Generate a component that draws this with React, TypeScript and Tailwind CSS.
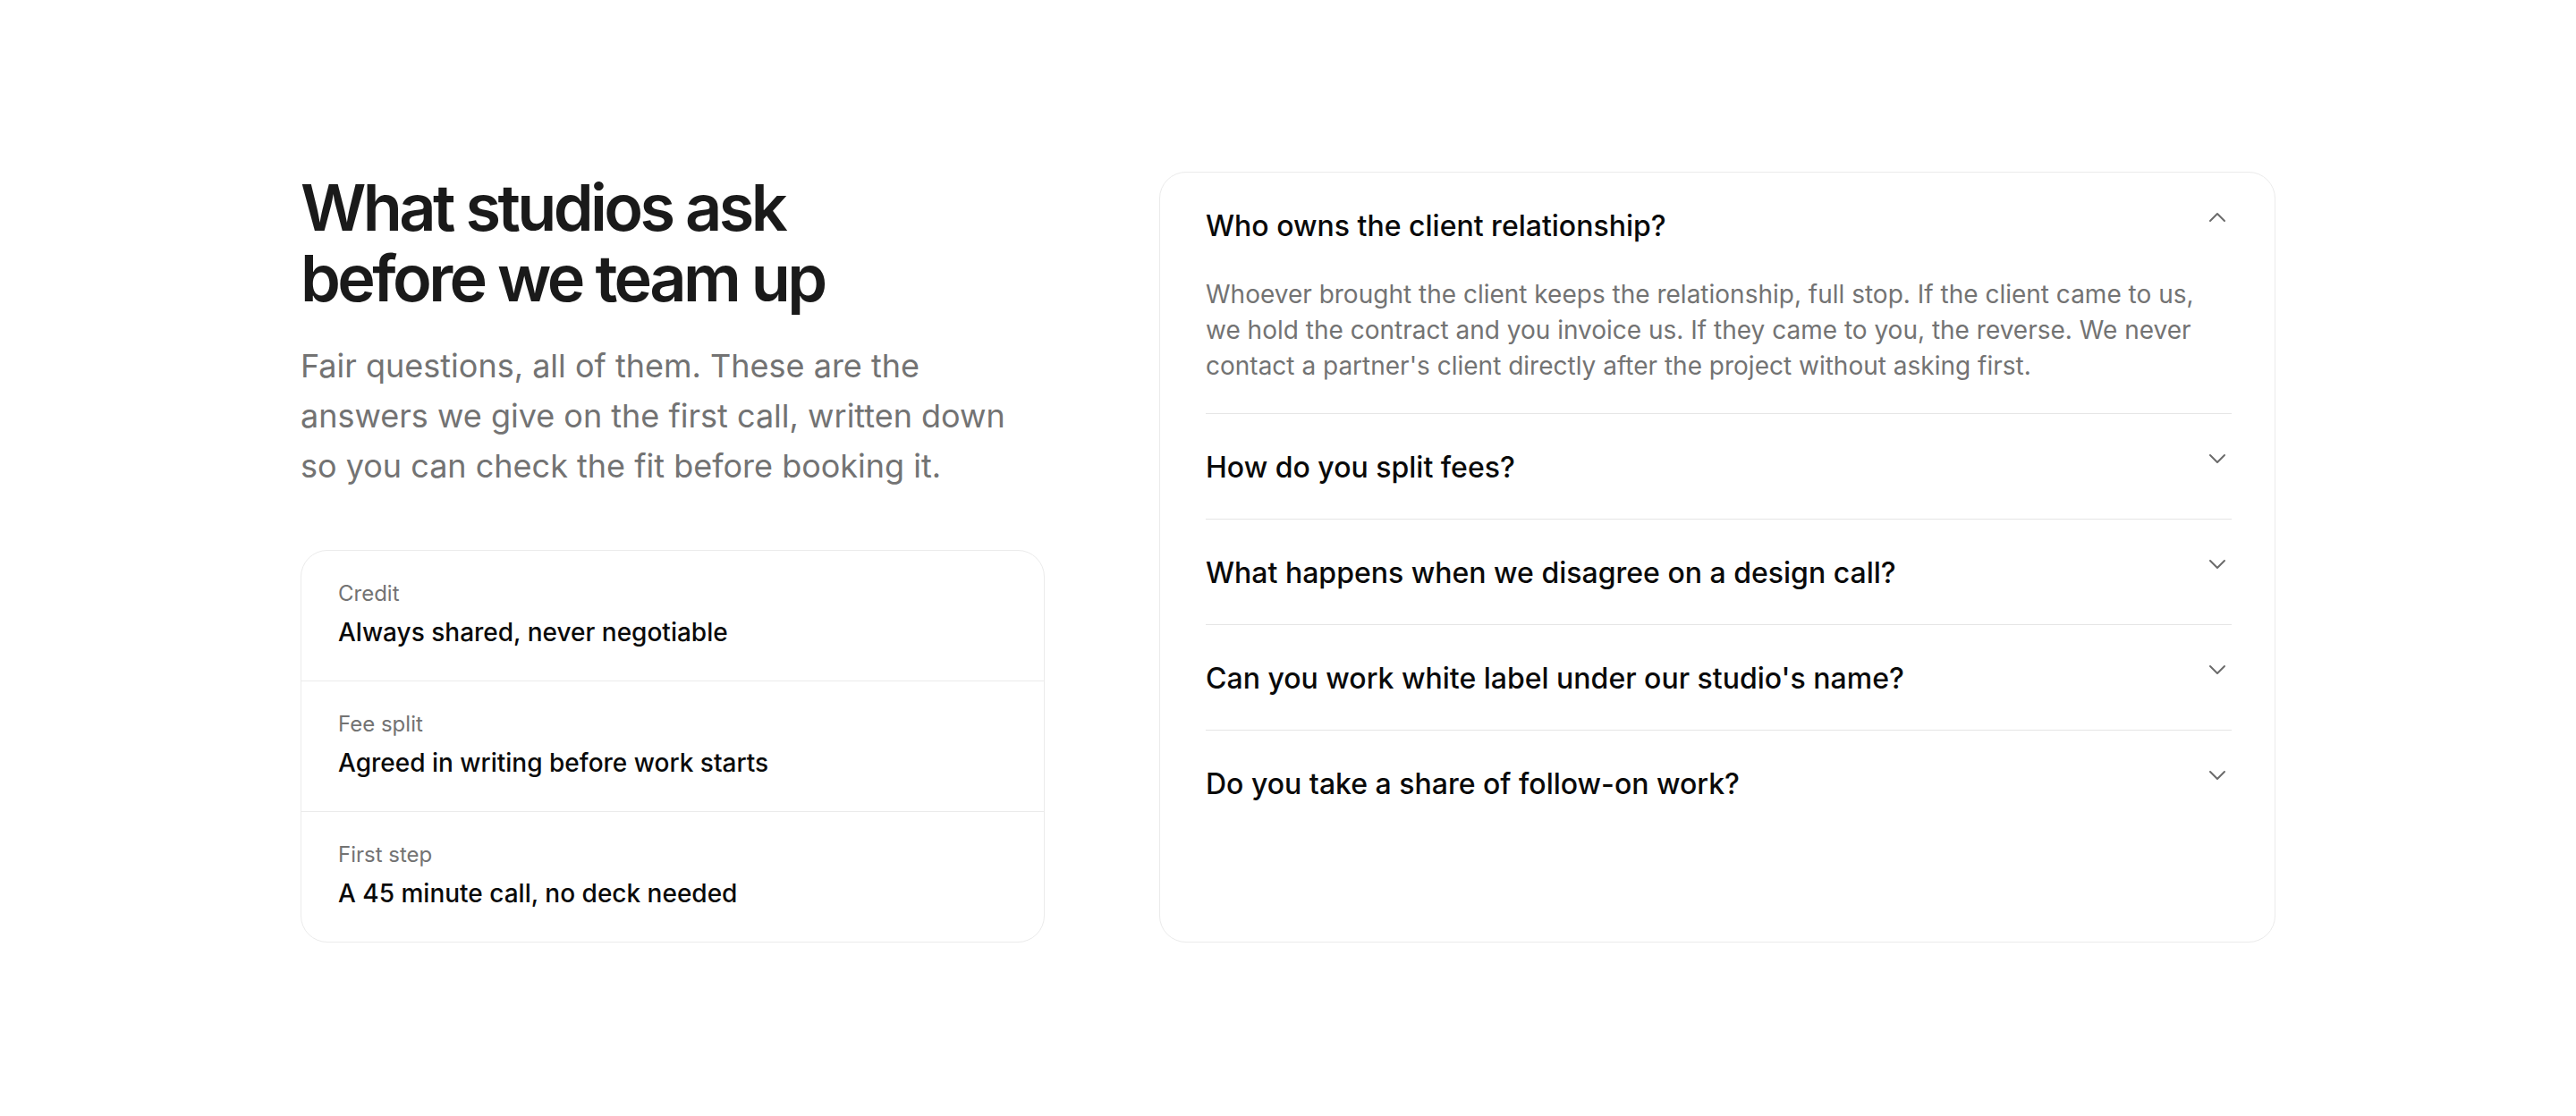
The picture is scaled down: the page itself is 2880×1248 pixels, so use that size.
import React from 'react';
import { ChevronDown, ChevronUp } from 'lucide-react';

const FACTS = [
  { label: 'Credit', value: 'Always shared, never negotiable' },
  { label: 'Fee split', value: 'Agreed in writing before work starts' },
  { label: 'First step', value: 'A 45 minute call, no deck needed' },
];

const FAQS = [
  {
    q: 'Who owns the client relationship?',
    a: "Whoever brought the client keeps the relationship, full stop. If the client came to us, we hold the contract and you invoice us. If they came to you, the reverse. We never contact a partner's client directly after the project without asking first.",
  },
  { q: 'How do you split fees?', a: '' },
  { q: 'What happens when we disagree on a design call?', a: '' },
  { q: "Can you work white label under our studio's name?", a: '' },
  { q: 'Do you take a share of follow-on work?', a: '' },
];

export default function App() {
  const [open, setOpen] = React.useState<number | null>(0);

  return (
    <div className="min-h-screen bg-white font-['Inter','Noto_Sans',sans-serif] antialiased">
      <section className="mx-auto grid max-w-[2208px] grid-cols-[2fr_3fr] gap-x-32 py-[192px]">
        {/* Left column */}
        <div className="flex flex-col">
          <h2 className="text-[72px] font-semibold leading-[79px] tracking-[-0.05em] text-[#1a1a1a]">
            What studios ask
            <br />
            before we team up
          </h2>
          <p className="mt-[31px] max-w-[815px] text-[36px] leading-[56px] text-[#737373]">
            Fair questions, all of them. These are the answers we give on the first call, written
            down so you can check the fit before booking it.
          </p>

          <div className="mt-[66px] divide-y divide-[#ebebeb] rounded-[30px] border border-[#ebebeb]">
            {FACTS.map((fact) => (
              <div key={fact.label} className="px-[41px] pb-9 pt-8">
                <div className="text-[24px] leading-[32px] text-[#737373]">{fact.label}</div>
                <div className="mt-[9px] text-[28px] font-medium leading-[36px] text-[#0a0a0a]">
                  {fact.value}
                </div>
              </div>
            ))}
          </div>
        </div>

        {/* Right column: accordion */}
        <div className="rounded-[30px] border border-[#ebebeb] pl-[51px] pr-12">
          <div className="divide-y divide-[#e5e5e5]">
            {FAQS.map((item, index) => {
              const isOpen = open === index;
              return (
                <div key={item.q}>
                  <button
                    type="button"
                    onClick={() => setOpen(isOpen ? null : index)}
                    className="flex w-full items-start justify-between gap-6 pb-[38px] pt-[40px] text-left"
                  >
                    <span className="text-[32px] font-medium leading-[39px] text-[#0a0a0a]">
                      {item.q}
                    </span>
                    {isOpen ? (
                      <ChevronUp className="mt-[-6px] h-8 w-8 shrink-0 text-[#6b6b6b]" strokeWidth={1.5} />
                    ) : (
                      <ChevronDown className="mt-[-6px] h-8 w-8 shrink-0 text-[#6b6b6b]" strokeWidth={1.5} />
                    )}
                  </button>
                  {isOpen && item.a && (
                    <p className="-mt-px pb-[33px] pr-6 text-[28px] leading-[40px] text-[#737373]">
                      {item.a}
                    </p>
                  )}
                </div>
              );
            })}
          </div>
        </div>
      </section>
    </div>
  );
}
